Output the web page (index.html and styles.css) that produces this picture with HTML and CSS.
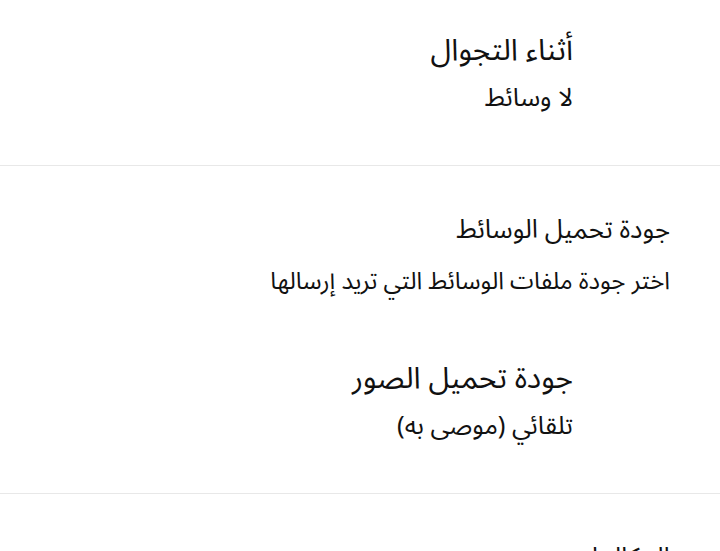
FILE: index.html
```html
<!DOCTYPE html>
<html lang="ar" dir="rtl">
<head>
<meta charset="utf-8">
<link rel="stylesheet" href="styles.css">
</head>
<body>
<div class="page">
  <section class="section first">
    <div class="item">
      <div class="item-title">أثناء التجوال</div>
      <div class="item-sub">لا وسائط</div>
    </div>
  </section>
  <div class="divider"></div>
  <section class="section">
    <div class="section-header">جودة تحميل الوسائط</div>
    <div class="section-desc">اختر جودة ملفات الوسائط التي تريد إرسالها</div>
    <div class="item item-spaced">
      <div class="item-title">جودة تحميل الصور</div>
      <div class="item-sub">تلقائي (موصى به)</div>
    </div>
  </section>
  <div class="divider"></div>
  <section class="section last">
    <div class="section-header">المكالمات</div>
  </section>
</div>
</body>
</html>
```

FILE: styles.css
```css
html, body {
  margin: 0;
  padding: 0;
  background: #ffffff;
}
body {
  font-family: "Noto Sans Arabic", "DejaVu Sans", sans-serif;
  color: #111111;
  direction: rtl;
  width: 720px;
  height: 551px;
  overflow: hidden;
}
.page {
  display: flex;
  flex-direction: column;
}
.section {
  display: flex;
  flex-direction: column;
  padding: 44px 50px 44px 0;
}
.section.first {
  padding: 29px 0 44px 0;
}
.section.last {
  padding-bottom: 0;
}
.item {
  display: flex;
  flex-direction: column;
  padding-right: 97px;
}
.section.first .item {
  padding-right: 147px;
}
.item-spaced {
  margin-top: 55px;
}
.item-title {
  font-size: 30px;
  line-height: 44px;
}
.item-sub {
  font-size: 25.5px;
  line-height: 46px;
  margin-top: 2px;
}
.section-header {
  font-size: 26px;
  line-height: 40px;
}
.section-desc {
  font-size: 24px;
  line-height: 40px;
  margin-top: 12px;
}
.divider {
  height: 1px;
  background: #e8e8e8;
}
```
